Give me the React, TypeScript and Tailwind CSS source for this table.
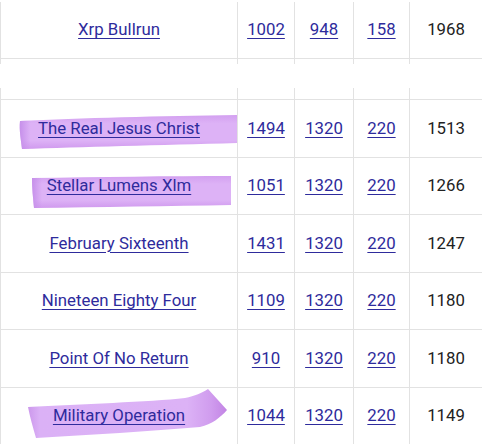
import React from "react";

type Row = { name: string; a: string; b: string; c: string; d: string; h: number };

const rows: Row[] = [
  { name: "The Real Jesus Christ", a: "1494", b: "1320", c: "220", d: "1513", h: 58 },
  { name: "Stellar Lumens Xlm", a: "1051", b: "1320", c: "220", d: "1266", h: 57 },
  { name: "February Sixteenth", a: "1431", b: "1320", c: "220", d: "1247", h: 58 },
  { name: "Nineteen Eighty Four", a: "1109", b: "1320", c: "220", d: "1180", h: 57 },
  { name: "Point Of No Return", a: "910", b: "1320", c: "220", d: "1180", h: 58 },
  { name: "Military Operation", a: "1044", b: "1320", c: "220", d: "1149", h: 57 },
];

const link = "text-[#2e2b9c] underline underline-offset-[3px] decoration-1";

function Cells({ r }: { r: { name: string; a: string; b: string; c: string; d: string } }) {
  return (
    <>
      <div className="w-[238px] border-l border-r border-[#e2e2e2] flex items-center justify-center">
        <span className={link}>{r.name}</span>
      </div>
      <div className="w-[57px] border-r border-[#e2e2e2] flex items-center justify-center">
        <span className={link}>{r.a}</span>
      </div>
      <div className="w-[59px] border-r border-[#e2e2e2] flex items-center justify-center">
        <span className={link}>{r.b}</span>
      </div>
      <div className="w-[56px] border-r border-[#e2e2e2] flex items-center justify-center">
        <span className={link}>{r.c}</span>
      </div>
      <div className="w-[72px] flex items-center justify-center text-[#222]">{r.d}</div>
    </>
  );
}

function Stub({ h }: { h: string }) {
  return (
    <div className={`flex ${h}`}>
      <div className="w-[238px] border-l border-r border-[#e2e2e2]" />
      <div className="w-[57px] border-r border-[#e2e2e2]" />
      <div className="w-[59px] border-r border-[#e2e2e2]" />
      <div className="w-[56px] border-r border-[#e2e2e2]" />
      <div className="w-[72px]" />
    </div>
  );
}

export default function App() {
  return (
    <div
      className="relative w-[482px] h-[447px] bg-white overflow-hidden text-[16.8px]"
      style={{ fontFamily: "Roboto, 'Noto Sans', sans-serif" }}
    >
      <svg className="absolute left-0 top-0" width="482" height="447" viewBox="0 0 482 447">
        <defs>
          <linearGradient id="hv" x1="0" y1="0" x2="0" y2="1">
            <stop offset="0" stopColor="#d3a0f0" />
            <stop offset="0.25" stopColor="#ddb2f6" />
            <stop offset="0.75" stopColor="#ddb2f6" />
            <stop offset="1" stopColor="#d09aee" />
          </linearGradient>
          <linearGradient id="hh" x1="0" y1="0" x2="1" y2="0">
            <stop offset="0" stopColor="#cc98ec" />
            <stop offset="0.06" stopColor="#dbb1f6" />
            <stop offset="0.8" stopColor="#dcb2f6" />
            <stop offset="0.92" stopColor="#d09cee" />
            <stop offset="1" stopColor="#c284e4" />
          </linearGradient>
          <linearGradient id="hl" x1="0" y1="0" x2="1" y2="0">
            <stop offset="0" stopColor="#c690ea" stopOpacity="1" />
            <stop offset="0.05" stopColor="#c690ea" stopOpacity="0" />
          </linearGradient>
        </defs>
        <path d="M20,121 C80,118 160,116 237,115 L237,143 C160,145 80,147 22,149 C21,140 19,130 20,121 Z" fill="url(#hv)" />
        <path d="M20,121 C80,118 160,116 237,115 L237,143 C160,145 80,147 22,149 C21,140 19,130 20,121 Z" fill="url(#hl)" />
        <path d="M32,178 C100,177 170,176 231,176 L231,205 C170,206 100,207 34,208 C33,198 32,188 32,178 Z" fill="url(#hv)" />
        <path d="M32,178 C100,177 170,176 231,176 L231,205 C170,206 100,207 34,208 C33,198 32,188 32,178 Z" fill="url(#hl)" />
        <path d="M28,407 C80,404 150,402 185,398 C195,396 202,393 208,389 L227,410 C220,418 212,424 200,427 C150,431 90,435 36,438 C33,428 30,417 28,407 Z" fill="url(#hh)" />
      </svg>

      <div className="relative flex flex-col">
        <div className="flex h-[59px] pt-[2px] border-b border-[#e2e2e2]">
          <Cells r={{ name: "Xrp Bullrun", a: "1002", b: "948", c: "158", d: "1968" }} />
        </div>
        <Stub h="h-[5px]" />
        <div className="h-[24px]" />
        <Stub h="h-[11px]" />
        {rows.map((r) => (
          <div key={r.name} className="flex border-t border-[#e2e2e2]" style={{ height: r.h }}>
            <Cells r={r} />
          </div>
        ))}
      </div>
    </div>
  );
}
